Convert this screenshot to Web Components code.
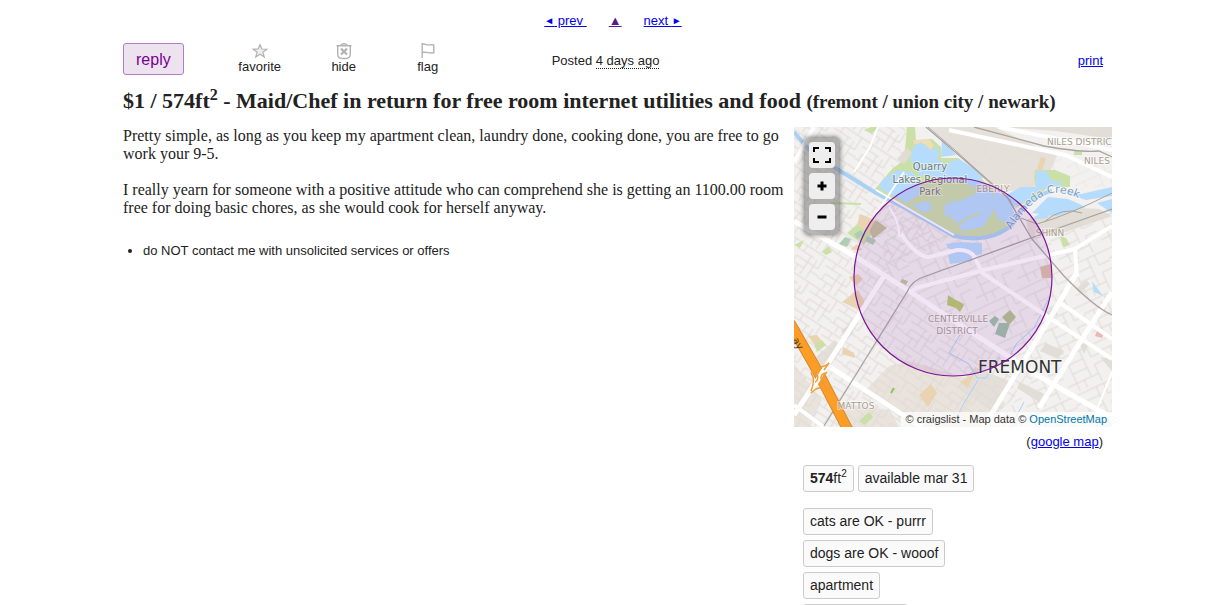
<!DOCTYPE html>
<html lang="en">
<head>
<meta charset="utf-8">
<meta name="viewport" content="width=device-width, initial-scale=1">
<title>Maid/Chef in return for free room internet utilities and food</title>
<style>
  body {
    margin: 0;
    background: white;
    color: #222;
    font: 13px/15px "Liberation Sans", Arial, sans-serif;
    overflow-x: hidden;
  }
</style>
</head>
<body>
<posting-page>
  <page-nav slot="nav"></page-nav>
  <posting-actions slot="actions"></posting-actions>
  <posting-title slot="title">
    $1 / 574ft<sup>2</sup> - Maid/Chef in return for free room internet utilities and food
    <span slot="area">(fremont / union city / newark)</span>
  </posting-title>
  <posting-body slot="body">
    <p>Pretty simple, as long as you keep my apartment clean, laundry done, cooking done, you are free to go work your 9-5.</p>
    <p>I really yearn for someone with a positive attitude who can comprehend she is getting an 1100.00 room free for doing basic chores, as she would cook for herself anyway.</p>
    <span slot="notice">do NOT contact me with unsolicited services or offers</span>
  </posting-body>
  <area-map slot="side"></area-map>
  <attr-group slot="side">
    <attr-tag><b>574</b>ft<sup>2</sup></attr-tag>
    <attr-tag>available mar 31</attr-tag>
  </attr-group>
  <attr-group slot="side" stacked>
    <attr-tag>cats are OK - purrr</attr-tag>
    <attr-tag>dogs are OK - wooof</attr-tag>
    <attr-tag>apartment</attr-tag>
    <attr-tag>laundry on site</attr-tag>
  </attr-group>
</posting-page>

<script>
class PostingPage extends HTMLElement {
  constructor() {
    super();
    this.attachShadow({mode: 'open'});
    this.shadowRoot.innerHTML = /*html*/ `
      <style>
        :host {
          display: block;
          height: 100vh;
          overflow: hidden;
        }
        .page {
          padding: 12px 103px 0 123px;
        }
        main {
          display: flex;
          align-items: flex-start;
          gap: 10px;
          padding-top: 13px;
        }
        .text {
          flex: 1;
          min-width: 0;
        }
        aside {
          flex: none;
          width: 318px;
        }
      </style>
      <div class="page">
        <slot name="nav"></slot>
        <slot name="actions"></slot>
        <slot name="title"></slot>
        <main>
          <div class="text"><slot name="body"></slot></div>
          <aside><slot name="side"></slot></aside>
        </main>
      </div>
    `;
  }
}

class PageNav extends HTMLElement {
  constructor() {
    super();
    this.attachShadow({mode: 'open'});
    this.shadowRoot.innerHTML = /*html*/ `
      <style>
        :host {
          display: block;
          padding-right: 9px;
        }
        nav {
          display: flex;
          justify-content: center;
          gap: 22px;
          height: 17px;
          line-height: 17px;
        }
        a {
          color: #00e;
          white-space: pre;
        }
        a.up {
          color: #551a8b;
        }
        small {
          font-size: 10px;
          vertical-align: 1px;
        }
      </style>
      <nav>
        <a href="#prev"><small>◄</small> prev </a>
        <a class="up" href="#up">▲</a>
        <a href="#next">next <small>►</small></a>
      </nav>
    `;
  }
}

class PostingActions extends HTMLElement {
  constructor() {
    super();
    this.attachShadow({mode: 'open'});
    this.shadowRoot.innerHTML = /*html*/ `
      <style>
        :host {
          display: flex;
          align-items: center;
          height: 36px;
          padding: 12px 9px 0 0;
        }
        button {
          font: inherit;
          cursor: pointer;
        }
        .reply {
          height: 32px;
          padding: 0 12px;
          margin-right: 34px;
          background: #ece3ef;
          border: 1px solid #b07cc6;
          border-radius: 3px;
          color: #770091;
          font-size: 16px;
        }
        .action {
          display: flex;
          flex-direction: column;
          align-items: center;
          width: 84px;
          padding: 0 0 3px;
          background: none;
          border: none;
          color: #222;
        }
        svg {
          display: block;
          width: 18px;
          height: 18px;
          margin-bottom: -1px;
          fill: none;
          stroke: #b3b3b3;
        }
        .posted {
          margin: 0 0 0 82px;
          padding-top: 2px;
        }
        time {
          border-bottom: 1px dotted #222;
        }
        a {
          margin-left: auto;
          padding-top: 2px;
          color: #00e;
        }
      </style>
      <button class="reply">reply</button>
      <button class="action">
        <svg viewBox="0 0 18 18">
          <path fill="#eee" stroke-width="1.2" d="M9 2.5l1.8 4.5 5 .2-4 3 1.5 4.9L9 12.3l-4.3 2.8 1.5-4.9-4-3 5-.2z"/>
        </svg>
        favorite
      </button>
      <button class="action">
        <svg viewBox="0 0 18 18">
          <path stroke-width="1.4" d="M1.5 3.7h15M6 3.5q0-1.8 3-1.8t3 1.8M2.7 4v8q0 4.5 4.5 4.5h3.6q4.5 0 4.5-4.5V4"/>
          <path stroke-width="2.2" d="M6 6.5l6 6M12 6.5l-6 6"/>
        </svg>
        hide
      </button>
      <button class="action">
        <svg viewBox="0 0 18 18">
          <path stroke-width="1.4" d="M3.2 16V1.7c3 0 3.5 1.2 6 1.2 2 0 3.5-.2 5.6 0v8c-2.5.2-4 .1-5.6-.3-2-.5-3-.6-6-.3"/>
        </svg>
        flag
      </button>
      <p class="posted">Posted <time>4 days ago</time></p>
      <a href="#print">print</a>
    `;
  }
}

class PostingTitle extends HTMLElement {
  constructor() {
    super();
    this.attachShadow({mode: 'open'});
    this.shadowRoot.innerHTML = /*html*/ `
      <style>
        :host {
          display: block;
          padding-top: 11px;
        }
        h2 {
          margin: 0;
          font: bold 22px/26px "Liberation Serif", "Times New Roman", serif;
        }
        small {
          font-size: 19px;
          line-height: 0;
        }
        ::slotted(sup) {
          font-size: 16px;
          line-height: 0;
        }
      </style>
      <h2><slot></slot><small><slot name="area"></slot></small></h2>
    `;
  }
}

class PostingBody extends HTMLElement {
  constructor() {
    super();
    this.attachShadow({mode: 'open'});
    this.shadowRoot.innerHTML = /*html*/ `
      <style>
        :host {
          display: block;
          font: 16px/18px "Liberation Serif", "Times New Roman", serif;
        }
        ::slotted(p) {
          margin: 0 0 18px;
        }
        ul {
          margin: 26px 0 0;
          padding-left: 20px;
          font: 13px/15px "Liberation Sans", Arial, sans-serif;
        }
      </style>
      <slot></slot>
      <ul>
        <li><slot name="notice"></slot></li>
      </ul>
    `;
  }
}

class AreaMap extends HTMLElement {
  constructor() {
    super();
    this.attachShadow({mode: 'open'});
    this.shadowRoot.innerHTML = /*html*/ `
      <style>
        :host {
          display: block;
        }
        .map {
          position: relative;
          overflow: hidden;
        }
        .map > svg {
          display: block;
          width: 100%;
        }
        .controls {
          position: absolute;
          left: 11px;
          top: 11px;
          display: flex;
          flex-direction: column;
          gap: 5px;
          padding: 4px;
          background: rgba(110, 110, 110, 0.5);
          border-radius: 4px;
          box-shadow: 0 0 5px 1px rgba(0, 0, 0, 0.5);
        }
        .controls button {
          display: flex;
          align-items: center;
          justify-content: center;
          width: 26px;
          height: 26px;
          padding: 0;
          background: #eee;
          border: none;
          border-radius: 4px;
          cursor: pointer;
        }
        .controls svg {
          width: 18px;
          height: 18px;
          fill: none;
          stroke: black;
        }
        .credit {
          position: absolute;
          right: 0;
          bottom: 0;
          padding: 0 5px;
          background: rgba(255, 255, 255, 0.7);
          color: #333;
          font-size: 11px;
        }
        .credit a {
          color: #0078a8;
          text-decoration: none;
        }
        .google {
          margin: 7px 9px 0 0;
          text-align: right;
        }
        .google a {
          color: #00e;
        }
        .place {
          font: 9px "DejaVu Sans", sans-serif;
          fill: #a99d8f;
          text-anchor: middle;
        }
        .halo {
          paint-order: stroke;
          stroke: rgba(255, 255, 255, 0.5);
          stroke-width: 2px;
        }
      </style>
      <div class="map">
        <svg viewBox="0 0 318 300">
          <defs>
            <pattern id="west" width="34" height="30" patternUnits="userSpaceOnUse" patternTransform="rotate(33)">
              <path d="M0 2H34M0 9H20M24 9V30M4 16H24M0 23H17M24 22H34M8 2V9M17 9V30M29 2V16H24M4 16V23M10 23V30" fill="none" stroke="#dedad5"/>
            </pattern>
            <pattern id="east" width="46" height="40" patternUnits="userSpaceOnUse" patternTransform="rotate(-25)">
              <path d="M0 3H46M0 12H26M26 3V32M10 12V40M10 22H26M34 3V14H46M34 22H46M34 22V40M0 32H34M18 32V40" fill="none" stroke="#dedad5"/>
            </pattern>
            <path id="creek" d="M217 103Q235 76 251 68Q265 62 289 73"/>
          </defs>
          <rect width="318" height="300" fill="#f2f1ef"/>

          <!-- built-up land -->
          <path fill="#e6e0da" d="M135 0H200L263 29 250 58 205 66 190 52 162 24z"/>
          <path fill="#e2ddd6" d="M203 0H318V12L262 4zM232 93l33-13 40 2 13 7-55 19-27 4z"/>
          <path fill="#e9e3db" d="M0 237l28 36-12 27H0zM68 267l27-28 20-5 75 22 22 21-20 23H118L88 277zM36 275l60 8 9 17H50z"/>
          <path fill="#e4dfd8" d="M22 230l19-17 6 9-17 22zM47 203l9-5 4 8-8 6zM181 240l34 14-18 30-34-24z"/>

          <path fill="url(#west)" d="M0 0H112L110 32 80 60 160 108 90 148 35 237 112 290 120 300H0z"/>
          <path fill="url(#west)" d="M90 148L160 188 243 248 190 300H120L35 237z"/>
          <path fill="url(#east)" d="M140 3L262 29 318 38V60L245 60 205 65 160 28z" opacity=".4"/>
          <path fill="url(#east)" d="M92 147L82 70 160 110H215L318 85V300H200L245 245 160 190z"/>

          <!-- parks -->
          <path fill="#cbe0a9" d="M113 0H121L122 13 138 12 147 20 147 31 164 31 200 63 222 96 206 108 187 111 160 108 126 92 81 62 98 42 110 33z"/>
          <path fill="#cbe0a9" d="M241 43l20 0 15 6v11l-21 0-17 12-18 10 12-15 10-7-2-8zM53 106l12-10 17 5-12 17zM70 3l7-3h7l-6 7zM28 125l7-6 3 6-6 3zM37 75l30 1v2l-30-1zM266 109l6 2 4 7-7 2zM280 24l8 0v4h-8zM65 294l10-9 4 5-8 8zM20 216l8-3 4 5-9 7zM0 118l10-5-4 8z"/>
          <path fill="#e0dcd4" d="M103 32l10-11 5 5-8 11z"/>
          <path fill="#efddb5" d="M119 13l17 0 4 6-4 4-5-6-11 0z"/>
          <path fill="#b0ccb4" d="M45 117l6-7 6 2-4 8zM60 107l7-4 4 5-8 4zM73 109l9 4-3 5-8-4z"/>
          <path fill="#c3c19c" d="M82 93l11 8-14 11-5-11z"/>
          <path fill="#e9d3b0" d="M66 87l15 6-6 12-12-7zM57 122l6-5 6 6-10 0zM48 175l16-12 8 15-2 7zM55 150l9-3 5 5-7 7zM14 209l9-1 5 6-8 3zM49 220l11 6 1 5-13-4zM125 268l12-11 6 9-9 14zM166 255l14-8-6 14zM247 30l5 1-4 13-5-2z"/>
          <path fill="#dcc0a8" d="M246 140l11-3 1 14h-10z"/>
          <path fill="#b6cc70" d="M154 168l6 4 8 4 2 2-4 7-4-4-9-3z"/>
          <path fill="#b9c89a" d="M108 152l6 2-2 4-6-3z"/>
          <path fill="#9fc0a8" d="M195 194l6-5 4 3-5 8zM205 196l11 0-5 15-10-4z"/>
          <path fill="#b3c38f" d="M208 190l8-7 6 7-7 8z"/>
          <path fill="#efb4b4" d="M303 204l7 2-2 5-7-2z"/>
          <path fill="#e1ded7" d="M252 216l18 8-6 8-18-8zM226 255l24 12-5 8-22-14zM282 162l10-9 4 4-10 9zM252 185l8-5 4 8-9 3zM286 218l10-5-6 14zM306 175l8-2-3 11zM306 230l12 2v12z"/>

          <!-- lakes -->
          <path fill="#b5dcfc" d="M120 19l7-4 10 8 7-3 0 12 6 5 15-5 14 9 11 10-15 4-22 0-12-5-15-1-10-16z"/>
          <path fill="#b5dcfc" d="M88 53l15-10 15 2 9 10 0 11-14 10-14-7-14-8zM119 78l16-4 3 8-8 4z"/>
          <path fill="#b5dcfc" d="M151 78l4-5 20-3 12-7 11 2 1 19-10 16-21 4-5-9-13-7zM200 64l14 6 8 20-6 8-12-6-6-14zM148 11l14 17-15 2zM163 31l15 14 20 20-14-3-22-10z"/>
          <path fill="#b5dcfc" d="M212 68l15-8 17 0-8 12-18 9zM242 44l10 0 6 10 10 1-2 4-10 0-14 6zM238 86l16-16 20 2 18 8-30 9zM242 89l12-7 0 9-16 2zM262 63l25 4 31-7v9l-26 4zM303 76l15-4v14z"/>
          <path fill="#b5dcfc" d="M152 117l14-2 22 1 0 11-10 2 0 5-22 3-2-9 8-3-8-4zM298 154l11 15-9-4z"/>
          <path fill="none" stroke="#cbe0a9" stroke-width="2" d="M163 99l12-9 12-4M150 76q22-2 34-16M150 92l8-4"/>
          <g fill="none" stroke="#a9d0f5">
            <path stroke-width="4" d="M0 5L10 17 23 31 43 42 82 66 113 82 160 109Q195 117 218 98 232 70 258 64"/>
            <path stroke-width="1" d="M254 173l-14 28-17 15-11 19M166 208l-11 18 20 11 8 14 9 0 14-21M184 253l-15 25-6 12M230 275l-12 22"/>
          </g>

          <!-- main roads -->
          <g fill="none" stroke="#fff">
            <path stroke-width="5" d="M0 94L62 130 115 164 171 201 241 247 318 291M90 149L33 238 0 288M33 238L112 290 128 300M283 145L258 188 190 299M318 165L283 220 245 281"/>
            <path stroke-width="4" d="M0 278L30 300M187 145L251 188 318 232M265 175L318 212M318 99L281 122 190 143 122 161 116 166M281 122L283 150"/>
            <path stroke-width="4" d="M155 3L271 28 318 50M205 0L318 23M107 107Q124 131 135 130L163 123Q179 122 183 135L188 145M0 35L20 0"/>
            <path stroke-width="2" d="M60 45L76 20 84 0M110 45L80 90M300 290L318 245M160 108L82 63M105 110Q106 95 95 80"/>
          </g>
          <g fill="none" stroke="#aaa49f">
            <path stroke-width="1.3" d="M132 0L160 24 213 70 238 112 270 149Q300 180 318 188M30 299L113 165Q118 153 132 149L160 139 248 107 318 82M180 0L250 19Q290 26 305 24L318 30"/>
            <path d="M134 0L162 24 216 73 224 90 243 97Q275 88 318 66M250 95Q268 79 288 86"/>
          </g>

          <!-- freeway and its ramps -->
          <path fill="none" stroke="#d68b2e" stroke-width="11" d="M-4 196L24 245 54 303"/>
          <path fill="none" stroke="#fb9d27" stroke-width="9" d="M-4 196L24 245 54 303"/>
          <path fill="none" stroke="#fff" stroke-width="5" d="M33 238L18 262"/>
          <path fill="none" stroke="#f39a35" stroke-width="1.5" d="M22 239Q28 242 35 236L30 243M17 246Q22 252 17 264M33 245Q25 252 33 262Q24 258 17 266M17 246a4 4 0 1 1 4 9M33 246a4 4 0 1 0-2 10"/>
          <path fill="none" stroke="#8fc15e" stroke-width="2" d="M97 266l3-5"/>

          <g class="place halo">
            <text x="288" y="18">NILES DISTRICT</text>
            <text x="303" y="37">NILES</text>
            <text x="199" y="65">EBERLY</text>
            <text x="256" y="109">SHINN</text>
            <text x="164" y="195">CENTERVILLE</text>
            <text x="163" y="207">DISTRICT</text>
            <text x="62" y="282">MATTOS</text>
          </g>
          <g class="halo" text-anchor="middle" font-family="DejaVu Sans" font-size="10" fill="#747c68">
            <text x="136" y="43">Quarry</text>
            <text x="136" y="56">Lakes Regional</text>
            <text x="136" y="68">Park</text>
          </g>
          <text class="halo" font-family="DejaVu Sans" font-size="11" fill="#7f9fbd"><textPath href="#creek">Alameda Creek</textPath></text>
          <text transform="translate(-2 213) rotate(60)" font-family="DejaVu Sans" font-size="10" fill="#4c351c">ay</text>
          <text class="halo" x="184" y="246" font-family="DejaVu Sans" font-size="17" fill="#333">FREMONT</text>

          <circle cx="159" cy="150" r="99" fill="#8a1ab0" fill-opacity=".11" stroke="#7b1596" stroke-width="1.2"/>
        </svg>
        <div class="controls">
          <button aria-label="Full screen">
            <svg viewBox="0 0 18 18"><path stroke-width="2" d="M1 6V2h5M12 2h5v4M17 12v4h-5M6 16H1v-4"/></svg>
          </button>
          <button aria-label="Zoom in">
            <svg viewBox="0 0 18 18"><path stroke-width="3" d="M4.5 9h9M9 4.5v9"/></svg>
          </button>
          <button aria-label="Zoom out">
            <svg viewBox="0 0 18 18"><path stroke-width="3" d="M4.5 9h9"/></svg>
          </button>
        </div>
        <div class="credit">© craigslist - Map data © <a href="#osm">OpenStreetMap</a></div>
      </div>
      <p class="google">(<a href="#google">google map</a>)</p>
    `;
  }
}

class AttrGroup extends HTMLElement {
  constructor() {
    super();
    this.attachShadow({mode: 'open'});
    this.shadowRoot.innerHTML = /*html*/ `
      <style>
        :host {
          display: flex;
          align-items: flex-start;
          gap: 4px;
          margin: 16px 0 0 9px;
        }
        :host([stacked]) {
          flex-direction: column;
          gap: 5px;
        }
      </style>
      <slot></slot>
    `;
  }
}

class AttrTag extends HTMLElement {
  constructor() {
    super();
    this.attachShadow({mode: 'open'});
    this.shadowRoot.innerHTML = /*html*/ `
      <style>
        :host {
          display: block;
          padding: 0 6px;
          background: #fafafa;
          border: 1px solid #ccc;
          border-radius: 3px;
          font-size: 14px;
          line-height: 25px;
        }
        ::slotted(sup) {
          font-size: 10px;
          line-height: 0;
        }
      </style>
      <slot></slot>
    `;
  }
}

customElements.define('posting-page', PostingPage);
customElements.define('page-nav', PageNav);
customElements.define('posting-actions', PostingActions);
customElements.define('posting-title', PostingTitle);
customElements.define('posting-body', PostingBody);
customElements.define('area-map', AreaMap);
customElements.define('attr-group', AttrGroup);
customElements.define('attr-tag', AttrTag);
</script>
</body>
</html>
